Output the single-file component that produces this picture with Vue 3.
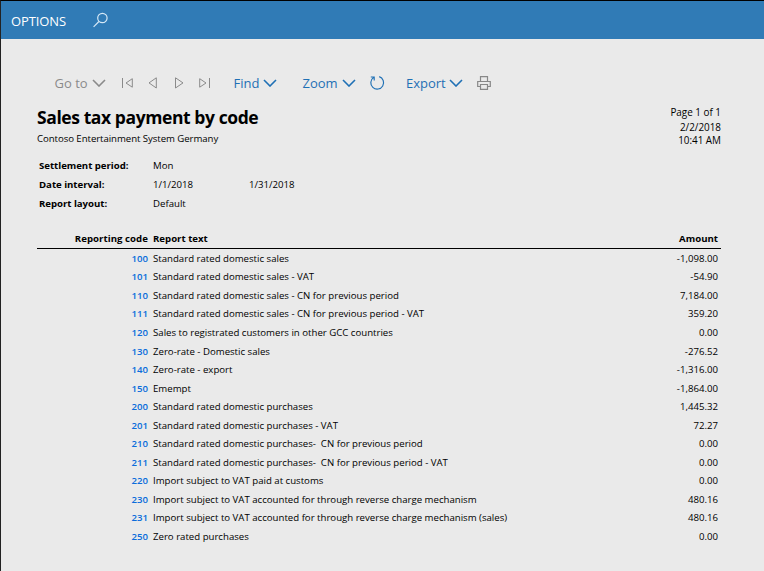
<script setup>
const params = [
  { label: 'Settlement period:', from: 'Mon', to: '' },
  { label: 'Date interval:', from: '1/1/2018', to: '1/31/2018' },
  { label: 'Report layout:', from: 'Default', to: '' },
]
const rows = [
  ['100', 'Standard rated domestic sales', '-1,098.00'],
  ['101', 'Standard rated domestic sales - VAT', '-54.90'],
  ['110', 'Standard rated domestic sales - CN for previous period', '7,184.00'],
  ['111', 'Standard rated domestic sales - CN for previous period - VAT', '359.20'],
  ['120', 'Sales to registrated customers in other GCC countries', '0.00'],
  ['130', 'Zero-rate - Domestic sales', '-276.52'],
  ['140', 'Zero-rate - export', '-1,316.00'],
  ['150', 'Emempt', '-1,864.00'],
  ['200', 'Standard rated domestic purchases', '1,445.32'],
  ['201', 'Standard rated domestic purchases - VAT', '72.27'],
  ['210', 'Standard rated domestic purchases-  CN for previous period', '0.00'],
  ['211', 'Standard rated domestic purchases-  CN for previous period - VAT', '0.00'],
  ['220', 'Import subject to VAT paid at customs', '0.00'],
  ['230', 'Import subject to VAT accounted for through reverse charge mechanism', '480.16'],
  ['231', 'Import subject to VAT accounted for through reverse charge mechanism (sales)', '480.16'],
  ['250', 'Zero rated purchases', '0.00'],
]
</script>

<template>
  <div class="window">
    <header class="bar">
      <span class="options">OPTIONS</span>
      <svg class="search" width="16" height="16" viewBox="0 0 16 16"><circle cx="9.4" cy="6" r="4.7" /><path d="M5.9 9.5L.6 14.9" /></svg>
    </header>
    <nav class="toolbar">
      <span class="menu goto muted"><span>Go to</span>
        <svg class="chev" width="14" height="8" viewBox="0 0 14 8"><path d="M1 1L7 7L13 1" /></svg></span>
      <span class="pager muted">
        <svg width="12" height="12" viewBox="0 0 12 12"><path d="M1.5 1V11M11.3 1.7V10.2L5 6Z" /></svg>
        <svg width="12" height="12" viewBox="0 0 12 12"><path d="M9.3 .8V11L2 5.9Z" /></svg>
        <svg width="12" height="12" viewBox="0 0 12 12"><path d="M2.5 .8V11L10 5.9Z" /></svg>
        <svg width="12" height="12" viewBox="0 0 12 12"><path d="M.7 1.7V10.2L7 6ZM10.5 1V11" /></svg>
      </span>
      <span class="menu find"><span>Find</span>
        <svg class="chev" width="14" height="8" viewBox="0 0 14 8"><path d="M1 1L7 7L13 1" /></svg></span>
      <span class="menu zoom"><span>Zoom</span>
        <svg class="chev" width="14" height="8" viewBox="0 0 14 8"><path d="M1 1L7 7L13 1" /></svg></span>
      <svg class="refresh" width="16" height="16" viewBox="0 0 16 16"><path d="M10.2 1.6A6.4 6.4 0 1 1 4.6 2.4M1.8 2H5.2V5.4" /></svg>
      <span class="menu export"><span>Export</span>
        <svg class="chev" width="14" height="8" viewBox="0 0 14 8"><path d="M1 1L7 7L13 1" /></svg></span>
      <svg class="printer" width="14" height="14" viewBox="0 0 14 14"><path d="M3.5 5.5V.7H10.5V5.5M3.5 10.5H.7V5.5H13.3V10.5H10.5M3.5 8.5H10.5V13.3H3.5Z" /></svg>
    </nav>
    <main class="report">
      <section class="heading">
        <div>
          <h1>Sales tax payment by code</h1>
          <p class="company">Contoso Entertainment System Germany</p>
        </div>
        <div class="stamp"><span class="page">Page 1 of 1</span><span class="date">2/2/2018</span><span>10:41 AM</span></div>
      </section>
      <dl class="params">
        <div v-for="p in params" :key="p.label" class="param">
          <dt>{{ p.label }}</dt><dd>{{ p.from }}</dd><dd>{{ p.to }}</dd>
        </div>
      </dl>
      <div class="row head"><span class="code">Reporting code</span><span class="text">Report text</span><span class="amount">Amount</span></div>
      <div class="body">
        <div v-for="r in rows" :key="r[0]" class="row">
          <span class="code">{{ r[0] }}</span><span class="text">{{ r[1] }}</span><span class="amount">{{ r[2] }}</span>
        </div>
      </div>
    </main>
  </div>
</template>

<style>
html, body { margin: 0; background: #eaeaea; overflow: hidden; }
</style>
<style scoped>
.window { box-sizing: border-box; width: 764px; height: 571px; border-top: 1px solid #000; border-left: 1px solid #222; background: #eaeaea; font-family: "Open Sans", "Noto Sans", sans-serif; font-size: 9.65px; color: #000; overflow: hidden; }
svg { display: block; flex: none; fill: none; stroke: currentColor; }
.bar { height: 38px; display: flex; align-items: center; background: #307bb6; color: #fff; padding-left: 10px; box-sizing: border-box; }
.options { width: 82px; font-size: 13px; line-height: 18px; letter-spacing: -0.12px; padding-top: 2px; box-sizing: border-box; }
.search { stroke-width: 1.2; color: #d5e8f6; }
.toolbar { height: 24px; margin-top: 32px; padding-left: 53.5px; display: flex; align-items: center; color: #1f70b5; font-size: 13px; }
.menu { display: flex; align-items: center; justify-content: space-between; flex: none; line-height: 24px; }
.chev { stroke-width: 1.6; }
.muted { color: #8a8a8a; }
.goto { width: 51px; }
.pager { display: flex; gap: 14px; margin-left: 15.5px; width: 90px; }
.find { width: 43.5px; margin-left: 22.5px; }
.zoom { width: 53px; margin-left: 25.5px; }
.refresh { margin-left: 13.5px; stroke-width: 1.15; }
.export { width: 56.5px; margin-left: 21px; }
.printer { margin-left: 14.5px; color: #888; stroke-width: 1.2; }
.report { width: 684px; margin-left: 36px; padding-top: 10px; }
.heading { display: flex; justify-content: space-between; height: 51px; }
h1 { margin: 0; font-size: 17.5px; line-height: 24px; font-weight: 700; letter-spacing: -0.41px; white-space: nowrap; }
.company { margin: 3px 0 0; line-height: 14px; letter-spacing: -0.06px; }
.stamp { display: flex; flex-direction: column; align-items: flex-end; line-height: 13px; font-size: 9.9px; }
.page { line-height: 15px; }
.date { line-height: 14px; }
.params { margin: 0; padding-left: 2px; }
.param { display: grid; grid-template-columns: 114px 96px 1fr; height: 19px; line-height: 19px; }
dt { font-weight: 700; letter-spacing: -0.03px; }
dd { margin: 0; }
.row { display: grid; grid-template-columns: 111px 1fr 80px; column-gap: 5px; height: 18.53px; line-height: 18.53px; padding-right: 3px; box-sizing: border-box; white-space: pre; }
.head { margin-top: 16px; height: 20px; line-height: 19px; border-bottom: 1px solid #000; font-weight: 700; }
.head .code { letter-spacing: 0.05px; }
.body { padding-top: 0.95px; }
.code, .amount { text-align: right; }
.body .code { color: #0b6ddb; font-weight: 600; }
</style>
